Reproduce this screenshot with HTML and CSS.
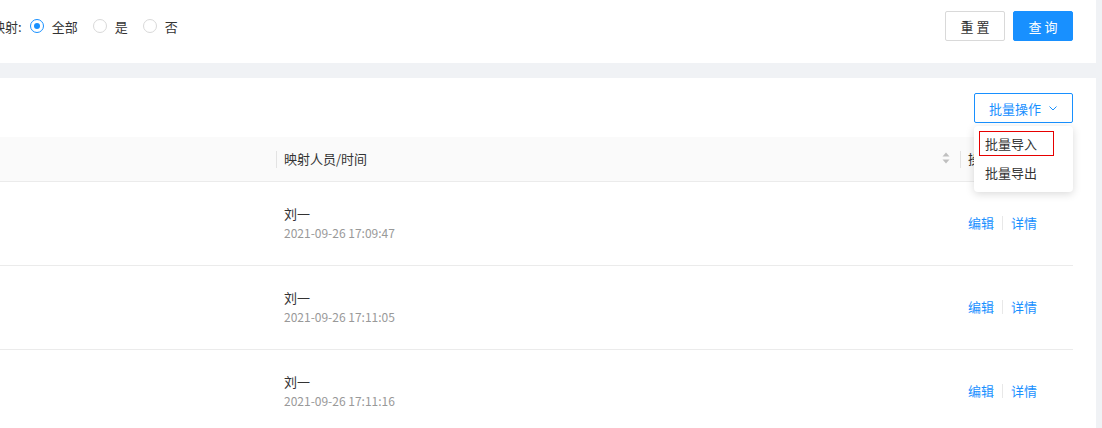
FILE: index.html
```html
<!DOCTYPE html>
<html lang="zh-CN">
<head>
<meta charset="utf-8">
<title>映射列表</title>
<link rel="stylesheet" href="styles.css">
</head>
<body>
<div class="page">
  <div class="card filter-card">
    <div class="filter">
      <span class="filter-label">映射:</span>
      <label class="radio checked"><span class="radio-dot"></span><span>全部</span></label>
      <label class="radio"><span class="radio-dot"></span><span>是</span></label>
      <label class="radio"><span class="radio-dot"></span><span>否</span></label>
    </div>
    <div class="actions">
      <button class="btn">重 置</button>
      <button class="btn btn-primary">查 询</button>
    </div>
  </div>
  <div class="gap-band"></div>
  <div class="card table-card">
    <div class="toolbar">
      <div class="batch">
        <button class="btn btn-outline">批量操作
          <svg class="chev" width="10" height="10" viewBox="0 0 10 10"><path d="M1.5 3.5 L5 7 L8.5 3.5" fill="none" stroke="#1890ff" stroke-width="1"/></svg>
        </button>
        <div class="menu">
          <div class="menu-item first"><span class="marked">批量导入</span></div>
          <div class="menu-item plain">批量导出</div>
        </div>
      </div>
    </div>
    <div class="table">
      <div class="row head">
        <div class="cell c1"></div>
        <div class="cell c2 divided"><span>映射人员/时间</span>
          <svg class="sorter" width="8" height="12" viewBox="0 0 8 12"><path d="M4 0.5 L7.5 4.5 H0.5 Z" fill="#bfbfbf"/><path d="M4 11.5 L7.5 7.5 H0.5 Z" fill="#bfbfbf"/></svg>
        </div>
        <div class="cell c3 divided"><span>操作</span></div>
      </div>
      <div class="row">
        <div class="cell c1"></div>
        <div class="cell c2"><div class="person"><div class="name">刘一</div><div class="time">2021-09-26 17:09:47</div></div></div>
        <div class="cell c3"><a class="link">编辑</a><span class="sep"></span><a class="link">详情</a></div>
      </div>
      <div class="row">
        <div class="cell c1"></div>
        <div class="cell c2"><div class="person"><div class="name">刘一</div><div class="time">2021-09-26 17:11:05</div></div></div>
        <div class="cell c3"><a class="link">编辑</a><span class="sep"></span><a class="link">详情</a></div>
      </div>
      <div class="row">
        <div class="cell c1"></div>
        <div class="cell c2"><div class="person"><div class="name">刘一</div><div class="time">2021-09-26 17:11:16</div></div></div>
        <div class="cell c3"><a class="link">编辑</a><span class="sep"></span><a class="link">详情</a></div>
      </div>
    </div>
  </div>
</div>
</body>
</html>
```
FILE: styles.css
```css
html, body {
  margin: 0;
  padding: 0;
  background: #f0f2f5;
  font-family: "Noto Sans CJK SC", "Noto Sans", sans-serif;
  font-size: 13px;
  color: #333;
}
.page {
  width: 1096px;
  height: 428px;
  overflow: hidden;
}
.card {
  background: #fff;
  overflow: hidden;
}
.filter-card {
  height: 63px;
  box-sizing: border-box;
  padding: 11px 23px 0 0;
  display: flex;
  justify-content: space-between;
  align-items: flex-start;
}
.filter {
  display: flex;
  align-items: center;
  height: 30px;
  margin-left: -8px;
}
.filter-label {
  margin-right: 8px;
}
.radio {
  display: flex;
  align-items: center;
  margin-right: 15px;
}
.radio-dot {
  width: 14px;
  height: 14px;
  box-sizing: border-box;
  border: 1px solid #d9d9d9;
  border-radius: 50%;
  margin-right: 8px;
  position: relative;
}
.radio.checked .radio-dot {
  border-color: #1890ff;
}
.radio.checked .radio-dot::after {
  content: "";
  position: absolute;
  left: 3px;
  top: 3px;
  width: 6px;
  height: 6px;
  border-radius: 50%;
  background: #1890ff;
}
.actions {
  display: flex;
  gap: 8px;
}
.btn {
  height: 30px;
  width: 60px;
  box-sizing: border-box;
  border: 1px solid #d9d9d9;
  border-radius: 2px;
  background: #fff;
  color: #333;
  font-family: inherit;
  font-size: 13px;
  padding: 0;
}
.btn-primary {
  background: #1890ff;
  border-color: #1890ff;
  color: #fff;
}
.gap-band {
  height: 15px;
}
.table-card {
  height: 350px;
  padding: 15px 23px 0 0;
  box-sizing: border-box;
}
.toolbar {
  display: flex;
  justify-content: flex-end;
  margin-bottom: 14px;
}
.batch {
  position: relative;
}
.btn-outline {
  width: 99px;
  border-color: #1890ff;
  color: #1890ff;
  display: flex;
  align-items: center;
  justify-content: center;
  gap: 7px;
}
.chev {
  display: block;
}
.menu {
  position: absolute;
  top: 33px;
  right: 0;
  width: 99px;
  background: #fff;
  border-radius: 4px;
  box-shadow: 0 2px 8px rgba(0, 0, 0, 0.15);
  padding: 4px 0 3px;
  z-index: 10;
}
.menu-item {
  height: 30px;
  line-height: 28px;
  padding-left: 11px;
}
.menu-item.first {
  height: 29px;
  padding: 2px 0 0 6px;
  box-sizing: border-box;
}
.marked {
  display: block;
  width: 73px;
  height: 23px;
  outline: 1px solid rgb(230, 0, 0);
  padding-left: 5px;
  box-sizing: border-box;
  line-height: 23px;
}
.table {
  width: 1073px;
}
.row {
  display: grid;
  grid-template-columns: 276px 684px 113px;
  height: 84px;
  border-bottom: 1px solid #ebebeb;
  box-sizing: border-box;
}
.row.head {
  height: 45px;
  background: #fafafa;
}
.cell {
  display: flex;
  align-items: center;
  padding-left: 8px;
  position: relative;
}
.row.head .cell {
  padding-bottom: 2px;
}
.c1 {
  padding-left: 0;
}
.c2 {
  justify-content: space-between;
  padding-right: 10px;
}
.divided::before {
  content: "";
  position: absolute;
  left: 0;
  top: 14px;
  width: 1px;
  height: 17px;
  background: #e3e3e3;
}
.sorter {
  display: block;
}
.person {
  margin-top: -2px;
}
.name {
  line-height: 20px;
}
.time {
  font-size: 12px;
  color: #999;
  line-height: 17px;
}
.c3 {
  padding-bottom: 2px;
}
.link {
  color: #1890ff;
  cursor: pointer;
}
.sep {
  display: inline-block;
  width: 1px;
  height: 14px;
  background: #e8e8e8;
  margin: 0 8px;
}
```
